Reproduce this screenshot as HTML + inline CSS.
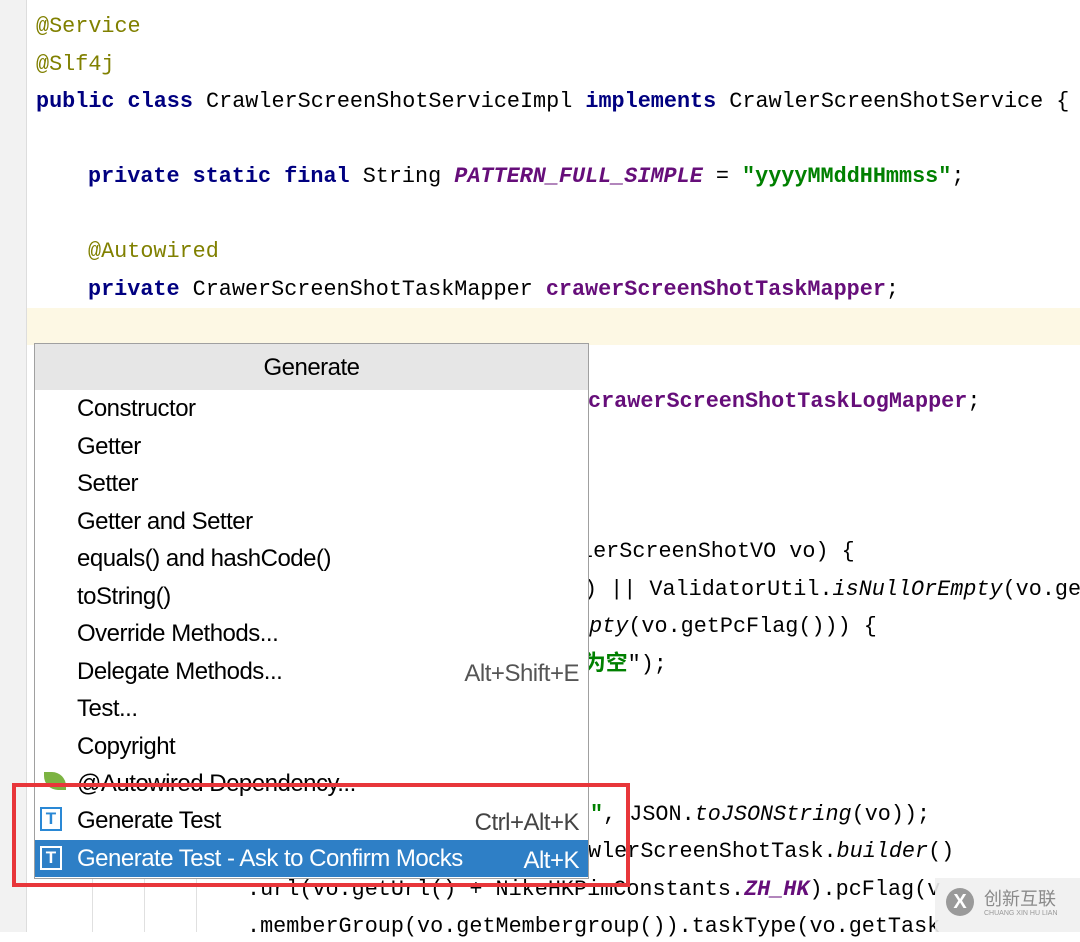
<!DOCTYPE html>
<html><head><meta charset="utf-8"><style>
body{margin:0;width:1080px;height:932px;overflow:hidden;background:#fff;position:relative;font-family:"Liberation Mono",monospace;}
.c{position:absolute;font-size:21.8px;white-space:pre;line-height:30px;color:#000;}
.k{color:#000080;font-weight:bold}
.a{color:#808000}
.s{color:#008000;font-weight:bold}
.p{color:#660e7a;font-weight:bold;font-style:italic}
.i{font-style:italic}
.m{position:absolute;font-family:"Liberation Sans","Noto Sans CJK SC",sans-serif;font-size:24px;white-space:pre;line-height:30px;letter-spacing:-0.5px}
.r{text-align:right;width:200px}
</style></head><body>
<div style="position:absolute;left:0;top:0;width:26px;height:932px;background:#f2f2f2;border-right:1px solid #ddd"></div>
<div style="position:absolute;left:27px;top:308px;width:1053px;height:37px;background:#fdf8e4"></div>
<div style="position:absolute;left:92px;top:800px;width:1px;height:132px;background:#e0e0e0"></div>
<div style="position:absolute;left:144px;top:800px;width:1px;height:132px;background:#e0e0e0"></div>
<div style="position:absolute;left:196px;top:800px;width:1px;height:132px;background:#e0e0e0"></div>

<div class="c a" style="left:36px;top:12px">@Service</div>
<div class="c a" style="left:36px;top:50px">@Slf4j</div>
<div class="c" style="left:36px;top:87px"><span class="k">public class</span> CrawlerScreenShotServiceImpl <span class="k">implements</span> CrawlerScreenShotService {</div>
<div class="c" style="left:88px;top:162px"><span class="k">private static final</span> String <span class="p">PATTERN_FULL_SIMPLE</span> = <span class="s">"yyyyMMddHHmmss"</span>;</div>
<div class="c a" style="left:88px;top:237px">@Autowired</div>
<div class="c" style="left:88px;top:275px"><span class="k">private</span> CrawerScreenShotTaskMapper <span class="p" style="font-style:normal">crawerScreenShotTaskMapper</span>;</div>
<div class="c" style="left:588px;top:387px"><span class="p" style="font-style:normal">crawerScreenShotTaskLogMapper</span>;</div>
<div class="c" style="left:580px;top:537px">lerScreenShotVO vo) {</div>
<div class="c" style="left:584px;top:575px">) || ValidatorUtil.<span class="i">isNullOrEmpty</span>(vo.ge</div>
<div class="c" style="left:576px;top:612px"><span class="i">mpty</span>(vo.getPcFlag())) {</div>
<div class="c s" style="left:584px;top:650px;font-family:'Liberation Mono','Noto Sans CJK SC',monospace">为空<span style="color:#000;font-weight:normal">");</span></div>
<div class="c" style="left:590px;top:800px"><span class="s">"</span>, JSON.<span class="i">toJSONString</span>(vo));</div>
<div class="c" style="left:588px;top:837px">wlerScreenShotTask.<span class="i">builder</span>()</div>
<div class="c" style="left:247px;top:875px">.url(vo.getUrl() + NikeHKPimConstants.<span class="p">ZH_HK</span>).pcFlag(v</div>
<div class="c" style="left:247px;top:912px">.memberGroup(vo.getMembergroup()).taskType(vo.getTask</div>

<div style="position:absolute;left:34px;top:343px;width:553px;height:534px;background:#fff;border:1px solid #a0a0a0"></div>
<div style="position:absolute;left:35px;top:344px;width:553px;height:46px;background:#e6e6e6"></div>
<div class="m" style="left:35px;top:353px;width:553px;text-align:center">Generate</div>
<div class="m" style="left:77px;top:394px">Constructor</div>
<div class="m" style="left:77px;top:432px">Getter</div>
<div class="m" style="left:77px;top:469px">Setter</div>
<div class="m" style="left:77px;top:507px">Getter and Setter</div>
<div class="m" style="left:77px;top:544px">equals() and hashCode()</div>
<div class="m" style="left:77px;top:582px">toString()</div>
<div class="m" style="left:77px;top:619px">Override Methods...</div>
<div class="m" style="left:77px;top:657px">Delegate Methods...</div>
<div class="m r" style="left:379px;top:659px;color:#555">Alt+Shift+E</div>
<div class="m" style="left:77px;top:694px">Test...</div>
<div class="m" style="left:77px;top:732px">Copyright</div>
<div style="position:absolute;left:44px;top:772px;width:22px;height:18px;background:#7cb342;border-radius:0 14px 0 14px"></div>
<div class="m" style="left:77px;top:769px">@Autowired Dependency...</div>
<div style="position:absolute;left:40px;top:807px;width:22px;height:24px;border:2px solid #2a88d5;background:#fff;box-sizing:border-box;color:#2a88d5;font:bold 17px 'Liberation Sans',sans-serif;text-align:center;line-height:20px">T</div>
<div class="m" style="left:77px;top:806px">Generate Test</div>
<div class="m r" style="left:379px;top:808px;color:#444">Ctrl+Alt+K</div>
<div style="position:absolute;left:35px;top:840px;width:553px;height:37px;background:#2e7fc6"></div>
<div style="position:absolute;left:40px;top:846px;width:22px;height:24px;border:2px solid #fff;background:#2e7fc6;box-sizing:border-box;color:#fff;font:bold 17px 'Liberation Sans',sans-serif;text-align:center;line-height:20px">T</div>
<div class="m" style="left:77px;top:844px;color:#fff">Generate Test - Ask to Confirm Mocks</div>
<div class="m r" style="left:379px;top:846px;color:#fff">Alt+K</div>

<div style="position:absolute;left:12px;top:783px;width:618px;height:104px;border:4px solid #e8363a;box-sizing:border-box"></div>

<div style="position:absolute;left:935px;top:878px;width:145px;height:54px;background:rgba(240,240,240,0.9)"></div>
<div style="position:absolute;left:946px;top:888px;width:28px;height:28px;border-radius:50%;background:#9a9a9a;color:#fff;font:bold 20px 'Liberation Sans',sans-serif;text-align:center;line-height:28px">X</div>
<div style="position:absolute;left:984px;top:888px;font:18px 'Noto Sans CJK SC',sans-serif;color:#8a8a8a;line-height:20px">创新互联</div>
<div style="position:absolute;left:984px;top:910px;font:7px 'Liberation Sans',sans-serif;color:#999">CHUANG XIN HU LIAN</div>
</body></html>
